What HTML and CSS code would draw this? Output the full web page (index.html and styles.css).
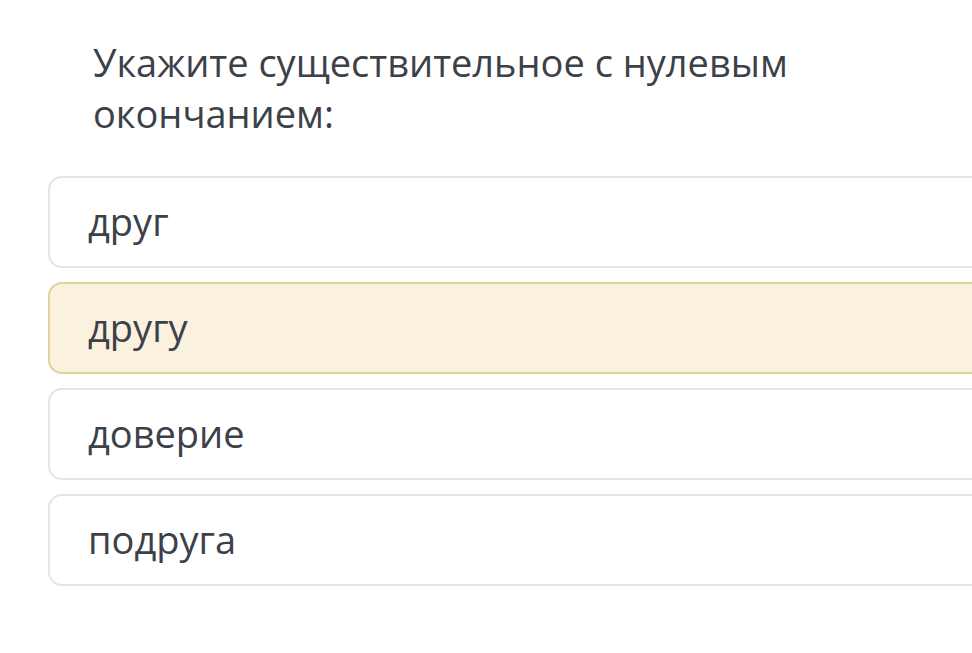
FILE: index.html
```html
<!DOCTYPE html>
<html lang="ru">
  <head>
    <meta charset="UTF-8" />
    <title>тест</title>
    <link rel="stylesheet" href="styles.css">
  </head>
  <body>
    <div class="quiz">
      <h1 class="question">Укажите существительное с нулевым окончанием:</h1>
      <div class="answers">
        <div class="answer">друг</div>
        <div class="answer selected">другу</div>
        <div class="answer">доверие</div>
        <div class="answer">подруга</div>
      </div>
    </div>
  </body>
</html>
```
FILE: styles.css
```css
html, body {
  margin: 0;
  background: #fff;
}

body {
  font-family: "Open Sans", sans-serif;
  color: #3c4149;
}

.quiz {
  padding: 37px 0 0 48px;
  overflow: hidden;
}

.question {
  font-size: 38px;
  font-weight: 400;
  line-height: 51px;
  margin: 0 0 37px 45px;
  width: 740px;
}

.answers {
  display: flex;
  flex-direction: column;
  gap: 14px;
  margin-right: -40px;
}

.answer {
  height: 88px;
  border: 2px solid #e4e4e4;
  border-radius: 14px;
  padding-left: 38px;
  font-size: 38px;
  line-height: 86px;
}

.selected {
  background: #faf1df;
  border-color: #e3d29c;
}
```
